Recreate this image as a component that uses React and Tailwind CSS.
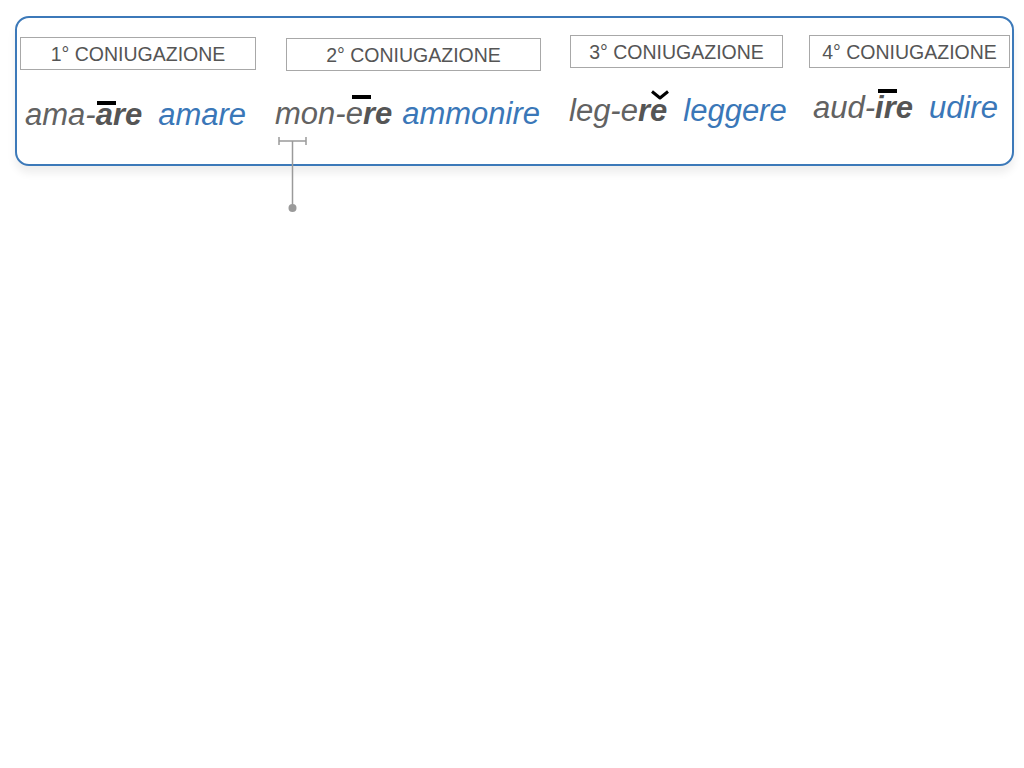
import React from 'react';

const columns = [
  {
    label: '1° CONIUGAZIONE',
    width: 'w-[266px]',
    boxTop: 'mt-[19px]',
    boxWidth: 'w-[236px]',
    wordTop: 'mt-[29px]',
    wordLeft: 'ml-[5px]',
    gap: 'gap-[16px]',
    id: 1,
    blue: 'amare',
  },
  {
    label: '2° CONIUGAZIONE',
    width: 'w-[284px]',
    boxTop: 'mt-[20px]',
    boxWidth: 'w-[255px]',
    wordTop: 'mt-[27px]',
    wordLeft: '-ml-[11px]',
    gap: 'gap-[10px]',
    id: 2,
    blue: 'ammonire',
  },
  {
    label: '3° CONIUGAZIONE',
    width: 'w-[239px]',
    boxTop: 'mt-[17px]',
    boxWidth: 'w-[213px]',
    wordTop: 'mt-[27px]',
    wordLeft: '-ml-[1px]',
    gap: 'gap-[16px]',
    id: 3,
    blue: 'leggere',
  },
  {
    label: '4° CONIUGAZIONE',
    width: 'w-[205px]',
    boxTop: 'mt-[17px]',
    boxWidth: 'w-[201px]',
    wordTop: 'mt-[24px]',
    wordLeft: 'ml-[4px]',
    gap: 'gap-[16px]',
    id: 4,
    blue: 'udire',
  },
];

function Macron({ className }) {
  return <span className={`absolute h-[4px] w-[19px] bg-black ${className}`} />;
}

function Stem({ id }) {
  if (id === 1) {
    return (
      <span>
        ama-
        <span className="font-bold text-[#555]">
          <span className="relative inline-block">
            a<Macron className="left-[1px] top-[2px]" />
          </span>
          re
        </span>
      </span>
    );
  }
  if (id === 2) {
    return (
      <span>
        mon-
        <span className="relative inline-block">
          e<Macron className="left-[6px] -top-[3px] h-[3px]" />
        </span>
        <span className="font-bold text-[#555]">re</span>
      </span>
    );
  }
  if (id === 3) {
    return (
      <span>
        leg-e
        <span className="font-bold text-[#555]">
          r
          <span className="relative inline-block">
            e
            <svg className="absolute left-[0px] -top-[5px]" width="20" height="10" viewBox="0 0 20 10">
              <path d="M2 1.5 L10 8 L18 1.5" fill="none" stroke="#000" strokeWidth="3" strokeLinejoin="round" />
            </svg>
          </span>
        </span>
      </span>
    );
  }
  return (
    <span>
      aud-
      <span className="font-bold text-[#555]">
        <span className="relative inline-block">
          i<Macron className="left-[3px] -top-[3px]" />
        </span>
        re
      </span>
    </span>
  );
}

export default function App() {
  return (
    <div className="relative w-[1024px] h-[768px] bg-white font-['Liberation_Sans',Arial,sans-serif]">
      <div className="pt-[16px] pl-[15px]">
        <div className="w-[999px] h-[150px] border-2 border-[#3c79b9] rounded-[14px] bg-white shadow-[0_7px_9px_rgba(0,0,0,0.07)] flex">
          <div className="w-[3px] shrink-0" />
          {columns.map((c) => (
            <div key={c.id} className={`${c.width} shrink-0 flex flex-col`}>
              <div
                className={`${c.boxTop} ${c.boxWidth} h-[33px] border border-[#a8a8a8] flex items-center justify-center text-[19.5px] leading-none text-[#555] pt-[2px]`}
              >
                {c.label}
              </div>
              <div className={`${c.wordTop} ${c.wordLeft} flex ${c.gap} text-[31px] leading-none italic whitespace-nowrap`}>
                <span className="text-[#626262]">
                  <Stem id={c.id} />
                </span>
                <span className="text-[#3a77b8]">{c.blue}</span>
              </div>
            </div>
          ))}
        </div>
      </div>

      {/* annotation marker below "mon-" */}
      <svg className="absolute left-[276px] top-[135px]" width="34" height="78" viewBox="0 0 34 78">
        <line x1="3" y1="6" x2="30" y2="6" stroke="#9a9a9a" strokeWidth="1.5" />
        <line x1="3" y1="2" x2="3" y2="10" stroke="#9a9a9a" strokeWidth="1.5" />
        <line x1="30" y1="2" x2="30" y2="10" stroke="#9a9a9a" strokeWidth="1.5" />
        <line x1="16.5" y1="6" x2="16.5" y2="72" stroke="#9a9a9a" strokeWidth="1.5" />
        <circle cx="16.5" cy="73" r="4" fill="#9a9a9a" />
      </svg>
    </div>
  );
}
